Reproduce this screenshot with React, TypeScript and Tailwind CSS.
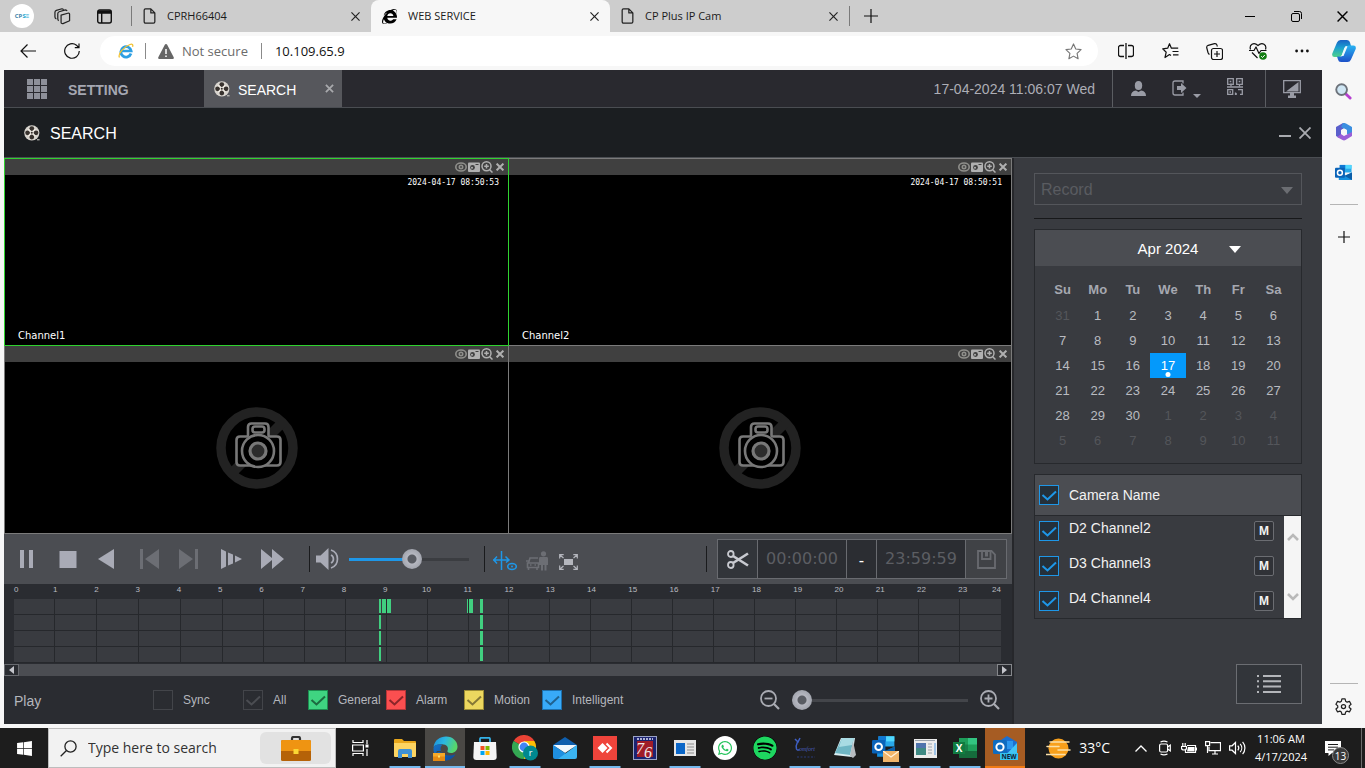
import React from "react";
import { FaWhatsapp, FaSpotify, FaWindows, FaInternetExplorer } from "react-icons/fa";

type IconProps = { className?: string };

const SEGOE = "font-['Open_Sans','Noto_Sans',sans-serif]";

/* ---------- browser icons ---------- */

const CloseX = ({ className = "size-[9px]" }: IconProps) => (
  <svg viewBox="0 0 10 10" className={className} fill="none" stroke="currentColor" strokeWidth="1.3">
    <path d="M0.5 0.5 9.5 9.5M9.5 0.5 0.5 9.5" />
  </svg>
);

const PageIcon = () => (
  <svg viewBox="0 0 14 18" className="h-4 w-[13px]" fill="none" stroke="#222" strokeWidth="1.4" strokeLinejoin="round">
    <path d="M2.5 1h6L13 5.5V15.500a1.500 1.500 0 0 1-1.500 1.500h-9A1.500 1.500 0 0 1 1 15.500v-13A1.500 1.500 0 0 1 2.500 1zM8.500 1v4.500H13" />
  </svg>
);

const Film = ({ className = "size-4" }: IconProps) => (
  <svg viewBox="0 0 16 16" className={className}>
    <circle cx="7.800" cy="7.800" r="7.600" fill="#d9d5cf" />
    <circle cx="7.800" cy="3.600" r="2.400" fill="#38322e" />
    <circle cx="3.600" cy="7.800" r="2.400" fill="#38322e" />
    <circle cx="12" cy="7.800" r="2.400" fill="#38322e" />
    <circle cx="7.800" cy="12" r="2.400" fill="#38322e" />
    <path d="M4.300 4.300l7 7M11.300 4.300l-7 7" stroke="#efeae2" strokeWidth="1.400" />
    <circle cx="7.800" cy="7.800" r="1" fill="#38322e" />
    <path d="M13 14.800h2.600" stroke="#d9d5cf" strokeWidth="1" />
  </svg>
);

const IeColor = () => (
  <svg viewBox="0 0 16 16" className="size-4" fill="none">
    <path d="M13 10.500A5.200 5.200 0 1 1 13.200 8H4.200" stroke="#2d9fe3" strokeWidth="2.700" />
    <path d="M1.500 14.500C-.5 11 6 3.500 12 1.500c2.500-.8 3.300.3 2.500 2.300" stroke="#f2c230" strokeWidth="1.300" />
  </svg>
);

const Copilot = () => (
  <svg viewBox="0 0 24 22" className="h-[22px] w-6">
    <defs>
      <linearGradient id="cpA" x1="0" y1="0" x2="0" y2="1">
        <stop offset="0" stopColor="#1b62c4" />
        <stop offset=".45" stopColor="#1b9fd0" />
        <stop offset="1" stopColor="#4fd28a" />
      </linearGradient>
      <linearGradient id="cpB" x1="0" y1="0" x2="0" y2="1">
        <stop offset="0" stopColor="#29b3f2" />
        <stop offset="1" stopColor="#1c50c8" />
      </linearGradient>
    </defs>
    <path d="M5 2.500Q6 0 8.500 0H15q2.500 0 3 2.500l1 3.500h-4q-2 0-2.700 2l-2.500 7q-.8 2-2.800 2H2.500Q-.5 17 .3 13.500z" fill="url(#cpA)" />
    <path d="M19 19.500Q18 22 15.500 22H9q-2.500 0-3-2.500L5 16.500h4q2 0 2.700-2l2.500-7q.8-2 2.800-2h4.500q3 0 2.200 3.500z" fill="url(#cpB)" />
    <path d="M13.500 6.500h2l-4 9.500h-2z" fill="#eafaff" />
  </svg>
);

const OutlookMark = ({ className = "size-4" }: IconProps) => (
  <svg viewBox="0 0 18 18" className={className}>
    <path d="M5 1h12.500v8H5z" fill="#28a8ea" />
    <path d="M5 1h6v4H5z" fill="#0f78d4" />
    <path d="M11 1h6.500v4H11z" fill="#50d9ff" />
    <path d="M4 9l7 3.500L18 9v8H4z" fill="#1490df" />
    <path d="M18 9v8l-8-4.500z" fill="#0a5ea8" />
    <rect x="0" y="4" width="10.500" height="10.500" rx="1" fill="#0a63b8" />
    <circle cx="5.200" cy="9.200" r="2.600" fill="none" stroke="#fff" strokeWidth="1.600" />
  </svg>
);

/* ---------- shared controls ---------- */

type CheckProps = {
  id: string;
  checked?: boolean;
  disabled?: boolean;
  box: string;
  tick: string;
};

function CheckBox({ id, checked = false, disabled = false, box, tick }: CheckProps) {
  return (
    <span className="relative block size-5 shrink-0">
      <input
        id={id}
        type="checkbox"
        defaultChecked={checked}
        disabled={disabled}
        className={`peer block size-5 appearance-none border ${box}`}
      />
      <svg
        viewBox="0 0 20 20"
        className={`pointer-events-none absolute inset-0 hidden size-5 peer-checked:block ${tick}`}
        fill="none"
        stroke="currentColor"
        strokeWidth="2"
      >
        <path d="M3.500 10l5 4.500L17 6.500" />
      </svg>
    </span>
  );
}

const TabTitle = ({ icon, title, className }: { icon: React.ReactNode; title: string; className: string }) => (
  <div className={`flex h-8 w-[239px] items-center pr-2 pl-[11px] ${className}`}>
    {icon}
    <button className="ml-[11px] flex-1 text-left text-[11px] leading-4 text-[#1b1b1b]">{title}</button>
    <button aria-label={`Close ${title}`} className="flex size-4 items-center justify-center text-[#222]">
      <CloseX className="size-[9px]" />
    </button>
  </div>
);

function BrowserTabs() {
  return (
    <div className={`flex h-8 items-center bg-[#cdcdcd] ${SEGOE}`}>
      <span className="ml-2.5 flex size-6 items-center justify-center rounded-full bg-white text-[6px] font-bold text-[#3c7fa8]">
        CP<span className="text-[#18a5cf]">S≡</span>
      </span>
      <button aria-label="Workspaces" className="ml-5">
        <svg viewBox="0 0 18 18" className="size-[17px]" fill="none" stroke="#222" strokeWidth="1.300" strokeLinejoin="round">
          <path d="M7.500 7.500l8-2.200q1 0 1 1v7.200l-7 3q-2 .3-2-1.500zM5 13.500q-1-.5-1-2V6q0-1.500 1.500-2L12 2q1.500 0 1.800 1.200M2.500 11.500Q1 11 1 9.500V4.500Q1 3 2.500 2.500L8.500.800q1 0 1.500 1" />
        </svg>
      </button>
      <button aria-label="Tab actions" className="ml-[26px]">
        <svg viewBox="0 0 15 15" className="size-[15px]" fill="none" stroke="#111" strokeWidth="1.400">
          <rect x=".7" y="1" width="13.600" height="13" rx="2" />
          <path d="M1 2.500h13M1 3.700h13" strokeWidth="2" />
          <path d="M4.700 4v10" />
        </svg>
      </button>
      <span className="ml-[19px] h-5 w-px bg-[#7a7a7a]" />
      <TabTitle icon={<PageIcon />} title="CPRH66404" className="" />
      <TabTitle
        icon={<FaInternetExplorer className="size-[15px] text-black" />}
        title="WEB SERVICE"
        className="rounded-t-lg bg-[#f7f7f7]"
      />
      <TabTitle icon={<PageIcon />} title="CP Plus IP Cam" className="" />
      <span className="h-5 w-px bg-[#7a7a7a]" />
      <button aria-label="New tab" className="ml-[14px]">
        <svg viewBox="0 0 14 14" className="size-[14px]" stroke="#111" strokeWidth="1.200">
          <path d="M7 0v14M0 7h14" />
        </svg>
      </button>
      <div className="ml-auto flex">
        <button aria-label="Minimize" className="flex h-8 w-[46px] items-center justify-center">
          <span className="h-px w-2.5 bg-black" />
        </button>
        <button aria-label="Restore" className="flex h-8 w-[46px] items-center justify-center">
          <svg viewBox="0 0 11 11" className="size-[11px]" fill="none" stroke="#000">
            <rect x=".5" y="2.500" width="8" height="8" rx="1.500" />
            <path d="M3 .5h5.500a2 2 0 0 1 2 2V8" />
          </svg>
        </button>
        <button aria-label="Close window" className="flex h-8 w-[46px] items-center justify-center">
          <CloseX className="size-[11px]" />
        </button>
      </div>
    </div>
  );
}

const ToolBtn = ({ label, children }: { label: string; children: React.ReactNode }) => (
  <button aria-label={label} className="flex h-8 w-11 items-center justify-center">
    {children}
  </button>
);

function AddressBar() {
  return (
    <div className={`flex h-[38px] items-center bg-[#f7f7f7] ${SEGOE}`}>
      <button aria-label="Back" className="ml-1.5 flex w-11 justify-center">
        <svg viewBox="0 0 16 14" className="h-[14px] w-4" fill="none" stroke="#111" strokeWidth="1.200">
          <path d="M16 7H1M7.500.5 1 7l6.500 6.500" />
        </svg>
      </button>
      <button aria-label="Refresh" className="flex w-11 justify-center">
        <svg viewBox="0 0 16 16" className="size-4" fill="none" stroke="#111" strokeWidth="1.200">
          <path d="M15.300 8A7.300 7.300 0 1 1 12.500 2.200L14.500 4.500M15 .5v4.200h-4.200" />
        </svg>
      </button>
      <div className="ml-1.5 flex h-[30px] flex-1 items-center rounded-full bg-white pr-4 pl-[18px]">
        <IeColor />
        <span className="ml-[11px] h-4 w-px bg-[#8a8a8a]" />
        <svg viewBox="0 0 16 15" className="ml-3 h-[15px] w-4">
          <path d="M8 0q.8 0 1.200.8l6.500 12.500q.6 1.700-1 1.700H1.300q-1.600 0-1-1.700L6.800.8Q7.200 0 8 0z" fill="#666" />
          <path d="M8 5v5M8 11.500v1.500" stroke="#fff" strokeWidth="1.500" />
        </svg>
        <button className="ml-2 text-[13px] leading-5 text-[#6b6b6b]">Not secure</button>
        <span className="ml-[13px] h-4 w-px bg-[#8a8a8a]" />
        <input
          aria-label="Address"
          defaultValue="10.109.65.9"
          className="ml-[13px] min-w-0 flex-1 bg-transparent text-[13px] leading-5 text-[#111] outline-none"
        />
        <button aria-label="Favorite">
          <svg viewBox="0 0 18 18" className="size-[17px]" fill="none" stroke="#777" strokeWidth="1.200" strokeLinejoin="round">
            <path d="M9 1l2.400 5.300 5.600.7-4.200 3.900 1.100 5.800L9 13.900l-4.900 2.800 1.100-5.800L1 7l5.600-.7z" />
          </svg>
        </button>
      </div>
      <div className="ml-1.5 flex">
        <ToolBtn label="Split screen">
          <svg viewBox="0 0 16 16" className="size-4" fill="none" stroke="#111" strokeWidth="1.300">
            <path d="M6 2.500H2.500a2 2 0 0 0-2 2v7a2 2 0 0 0 2 2H6M10 2.500h3.500a2 2 0 0 1 2 2v7a2 2 0 0 1-2 2H10M8 0v16" />
          </svg>
        </ToolBtn>
        <ToolBtn label="Favorites">
          <svg viewBox="0 0 17 16" className="h-4 w-[17px]" fill="none" stroke="#111" strokeWidth="1.200" strokeLinejoin="round">
            <path d="M9 12.500 7.500 11.500 3 14.500 4.200 9.200.7 5.800l5-.6L7.500.7l1.900 4.500h6.800M10.500 8.500h6M11 11.800h5.500" />
          </svg>
        </ToolBtn>
        <ToolBtn label="Collections">
          <svg viewBox="0 0 17 17" className="size-[17px]" fill="none" stroke="#111" strokeWidth="1.200">
            <rect x="5.500" y="5.500" width="11" height="11" rx="2" />
            <path d="M11 8v6M8 11h6M3.500 11.500Q2.500 11 2 9.500L.8 5Q.300 3 2.200 2.300L8.500.7q2-.3 2.500 1.500L11.400 3.500" />
          </svg>
        </ToolBtn>
        <ToolBtn label="Browser essentials">
          <svg viewBox="0 0 18 18" className="size-[18px]" fill="none" stroke="#111" strokeWidth="1.200" strokeLinejoin="round">
            <path d="M1.500 7.500C0 3 4.500-.5 9 3.500 13.500-.5 18 3 16.500 7.500M3 10.500l5.500 5.500M0 8.500h5l2-3.500 3 6.500 2-3h5.500" />
            <circle cx="14" cy="14" r="3.800" fill="#107c10" stroke="none" />
            <path d="M12.200 14.200l1.300 1.300 2.300-2.500" stroke="#fff" strokeWidth="1" />
          </svg>
        </ToolBtn>
        <ToolBtn label="Settings and more">
          <svg viewBox="0 0 14 4" className="h-1 w-[14px]" fill="#111">
            <circle cx="1.600" cy="2" r="1.400" />
            <circle cx="7" cy="2" r="1.400" />
            <circle cx="12.400" cy="2" r="1.400" />
          </svg>
        </ToolBtn>
      </div>
      <button aria-label="Copilot" className="flex w-[41px] justify-center pr-0.5">
        <Copilot />
      </button>
    </div>
  );
}

function EdgeSidebar() {
  return (
    <aside className="flex w-[43px] shrink-0 flex-col items-center bg-[#f7f7f7]">
      <button aria-label="Search" className="mt-[13px]">
        <svg viewBox="0 0 18 18" className="block size-[17px]">
          <path d="M11 11l5 5" stroke="#b63fd0" strokeWidth="3" strokeLinecap="round" />
          <circle cx="7" cy="7" r="5.700" fill="#cfe6f4" stroke="#6d737b" strokeWidth="2" />
        </svg>
      </button>
      <button aria-label="Microsoft 365" className="mt-[23px]">
        <svg viewBox="0 0 18 18" className="block size-[18px]">
          <path d="M8 0 1 4v9l3.500 2 1.500-1V7l6-3.500V2z" fill="#5a5fcb" />
          <path d="M8 0q1.500-.3 3 .5L17 4v7l-5 .5V7L6 4z" fill="#3b8fe0" />
          <path d="M17 9v4l-6.500 4q-1.500.8-3 0L2 14l4-3 3 2z" fill="#9a5fd8" />
          <path d="M9 5.500l3 1.800v3.400l-3 1.800-3-1.800V7.300z" fill="#f7f7f7" />
        </svg>
      </button>
      <button aria-label="Outlook" className="mt-[23px]">
        <OutlookMark className="block size-[17px]" />
      </button>
      <span className="mt-[23px] h-px w-7 bg-[#b5b5b5]" />
      <button aria-label="Customize" className="mt-[26px]">
        <svg viewBox="0 0 12 12" className="block size-3" stroke="#111" strokeWidth="1.200">
          <path d="M6 0v12M0 6h12" />
        </svg>
      </button>
      <span className="mt-auto h-px w-7 bg-[#b5b5b5]" />
      <button aria-label="Settings" className="mt-3.5 mb-[13px]">
        <svg viewBox="0 0 18 18" className="block size-[17px]" fill="none" stroke="#222" strokeWidth="1.300" strokeLinejoin="round">
          <path d="M7.300 1h3.400l.6 2.500 1.500.9 2.500-.8 1.700 3-1.900 1.700v1.700l1.900 1.700-1.700 3-2.500-.8-1.500.9-.6 2.500H7.300l-.6-2.500-1.500-.9-2.500.8-1.700-3L2.900 10V8.300L1 6.600l1.700-3 2.500.8 1.500-.9z" />
          <circle cx="9" cy="9.100" r="2.200" />
        </svg>
      </button>
    </aside>
  );
}

/* ---------- application header ---------- */

function AppHeader() {
  return (
    <header className="flex h-[38px] items-stretch border-b border-[#4a4d52] bg-[#29292f] text-[#9a9ca6]">
      <button className="flex w-[200px] items-center pl-[23px] text-sm font-bold text-[#a5a7b2]">
        <svg viewBox="0 0 20 20" className="mr-[21px] size-5" fill="#8e909a">
          <path d="M0 0h6v6H0zM7 0h6v6H7zM14 0h6v6h-6zM0 7h6v6H0zM7 7h6v6H7zM14 7h6v6h-6zM0 14h6v6H0zM7 14h6v6H7zM14 14h6v6h-6z" />
        </svg>
        <span className="pt-0.5">SETTING</span>
      </button>
      <div className="flex w-[138px] items-center bg-[#56575c] pr-2 pl-2.5 text-white">
        <Film />
        <button className="ml-2 flex-1 pt-0.5 text-left text-sm">SEARCH</button>
        <button aria-label="Close search tab" className="text-[#a8a9ac]">
          <svg viewBox="0 0 10 10" className="size-[9px]" stroke="currentColor" strokeWidth="2">
            <path d="M1 1l8 8M9 1 1 9" />
          </svg>
        </button>
      </div>
      <time className="ml-auto flex items-center pr-[17px] text-sm text-[#adaeb6]">17-04-2024 11:06:07 Wed</time>
      <div className="flex w-[153px] items-center border-l border-[#5b5d62] pl-[18px]">
        <button aria-label="User">
          <svg viewBox="0 0 15 15" className="size-[15px]" fill="currentColor">
            <ellipse cx="7.500" cy="4.500" rx="3.700" ry="4.500" />
            <path d="M0 15q0-5 5-5.500l2.500 1.500L10 9.500q5 .5 5 5.500z" />
          </svg>
        </button>
        <button aria-label="Log out" className="ml-[26px] flex items-end">
          <svg viewBox="0 0 15 16" className="mb-0.5 h-4 w-[15px]" fill="none" stroke="currentColor" strokeWidth="1.300">
            <path d="M11 3.500V1H3Q1 1 1 3v10q0 2 2 2h8v-2.500" />
            <path d="M5 6h4V3l5.500 5L9 13v-3H5z" fill="currentColor" stroke="none" />
          </svg>
          <svg viewBox="0 0 8 4" className="ml-1.5 h-1 w-2" fill="currentColor">
            <path d="M0 0h8L4 4z" />
          </svg>
        </button>
        <button aria-label="QR code" className="mb-1 ml-[26px]">
          <svg viewBox="0 0 16 17" className="h-[17px] w-4" fill="none" stroke="currentColor" strokeWidth="1.300">
            <path d="M.7.7h5.600v5.600H.7zM9.700.7h5.600v5.600H9.700zM0 9h16M.7 11.700h5v4.600h-5zM11 11.700h4.300v4.600H13M8.500 14.500v2.500M2.700 3.500h1.600M11.700 3.500h1.600" />
            <path d="M4 5.500v3M12.500 6v2.500M2.500 14h1.500M8 16h2" />
          </svg>
        </button>
      </div>
      <button aria-label="Full screen" className="flex w-[57px] items-center border-l border-[#5b5d62] pl-[17px]">
        <svg viewBox="0 0 18 18" className="size-[18px]" fill="none" stroke="currentColor" strokeWidth="1.300">
          <path d="M.7.7h16.600v12H.7z" />
          <path d="M15.500 2v9.500H3zM7 13h4v2.500h2V18H5v-2.500h2z" fill="currentColor" stroke="none" />
        </svg>
      </button>
    </header>
  );
}

function PageTitle() {
  return (
    <div className="flex h-[50px] items-center border-b border-[#4a4d52] bg-[#1b1e21] pr-[11px] pl-5">
      <Film />
      <h1 className="ml-2.5 flex-1 pt-0.5 text-base text-white">SEARCH</h1>
      <button aria-label="Minimize page" className="mt-1.5 h-0.5 w-3 bg-[#a9abb0]" />
      <button aria-label="Close page" className="ml-2 text-[#a9abb0]">
        <svg viewBox="0 0 12 12" className="size-3" stroke="currentColor" strokeWidth="1.800">
          <path d="M.5.500l11 11M11.500.5.500 11.500" />
        </svg>
      </button>
    </div>
  );
}

/* ---------- video wall ---------- */

type Cell = { name?: string; time?: string; border: string };

const CELLS: Cell[] = [
  { name: "Channel1", time: "2024-04-17 08:50:53", border: "border border-[#2fd32f]" },
  { name: "Channel2", time: "2024-04-17 08:50:51", border: "border-y border-r border-[#7b7b7b]" },
  { border: "border-x border-b border-[#7b7b7b]" },
  { border: "border-r border-b border-[#7b7b7b]" },
];

const NoCamera = () => (
  <svg viewBox="0 0 82 82" className="size-[82px]" fill="none">
    <circle cx="41" cy="41" r="36" stroke="#222" strokeWidth="9.500" />
    <path d="M17 65 65 17" stroke="#222" strokeWidth="10" />
    <g stroke="#787878" strokeWidth="2.600">
      <path
        d="M28 58.500h-4q-3.500 0-3.500-3.500V33q0-3.500 3.500-3.500h6.500q1.500 0 1.500-1.500V20q0-3.500 3.500-3.500h13.500q3.500 0 3.500 3.500v8q0 1.500 1.500 1.500H61q3.500 0 3.500 3.500v22q0 3.500-3.500 3.500h-4z"
        fill="#000"
      />
      <rect x="36.500" y="19.500" width="12" height="6" rx="2.500" />
      <circle cx="42" cy="44" r="16" fill="#000" />
      <circle cx="42" cy="44" r="8" fill="#2c2c2c" strokeWidth="3.200" />
    </g>
  </svg>
);

function CellTools() {
  return (
    <div className="flex h-4 items-center justify-end gap-px bg-[#404040] pr-1 text-[#b0b0b0]">
      <button aria-label="Fisheye">
        <svg viewBox="0 0 12 10" className="h-2.5 w-3" fill="none" stroke="#8f8f8b" strokeWidth="1.600">
          <ellipse cx="6" cy="5" rx="5.200" ry="4" />
          <circle cx="6" cy="5" r="1.700" />
        </svg>
      </button>
      <button aria-label="Snapshot">
        <svg viewBox="0 0 12 10" className="h-2.5 w-3" fill="currentColor">
          <path d="M0 1.500q0-1 1-1h10q1 0 1 1V9q0 1-1 1H1q-1 0-1-1z" />
          <circle cx="4.500" cy="5.500" r="2.400" fill="#404040" />
          <circle cx="4" cy="5.800" r="1" fill="#b0b0b0" />
          <path d="M7.500 2.500h3" stroke="#404040" />
        </svg>
      </button>
      <button aria-label="Zoom">
        <svg viewBox="0 0 12 12" className="size-3" fill="none" stroke="currentColor" strokeWidth="1.500">
          <circle cx="5.500" cy="5.300" r="4.500" />
          <path d="M5.500 3v4.600M3.200 5.300h4.600M8.700 8.700l2.800 2.800" />
        </svg>
      </button>
      <button aria-label="Close channel" className="ml-0.5">
        <svg viewBox="0 0 9 9" className="size-2" stroke="currentColor" strokeWidth="2.200">
          <path d="M.7.7l7.600 7.600M8.300.7.7 8.300" />
        </svg>
      </button>
    </div>
  );
}

function VideoWall() {
  return (
    <div className="grid flex-1 grid-cols-[505fr_503fr] grid-rows-2">
      {CELLS.map((c, i) => (
        <section key={i} className={`flex min-h-40 flex-col bg-black ${c.border}`}>
          <CellTools />
          {c.name ? (
            <div className="flex flex-1 flex-col justify-between pt-[3px] pr-[9px] pb-[3px] pl-[13px] text-white">
              <span className="text-right font-['DejaVu_Sans_Mono',monospace] text-[8px] leading-[10px]">{c.time}</span>
              <span className="font-['DejaVu_Sans',sans-serif] text-[10px] leading-3">{c.name}</span>
            </div>
          ) : (
            <div className="flex flex-1 items-center justify-center">
              <NoCamera />
            </div>
          )}
        </section>
      ))}
    </div>
  );
}

/* ---------- playback controls ---------- */

const PlayBtn = ({ label, d, dim = false }: { label: string; d: string; dim?: boolean }) => (
  <button
    aria-label={label}
    disabled={dim}
    className={`flex h-8 w-[41px] items-center justify-center ${dim ? "text-[#6c6e74]" : "text-[#a9abb6]"}`}
  >
    <svg viewBox="0 0 26 20" className="h-5 w-[26px]" fill="currentColor">
      <path d={d} />
    </svg>
  </button>
);

const THUMB =
  "[&::-webkit-slider-thumb]:size-5 [&::-webkit-slider-thumb]:appearance-none [&::-webkit-slider-thumb]:rounded-full [&::-webkit-slider-thumb]:bg-[radial-gradient(circle,#595c63_0_4px,#b5b7c0_5px,#a2a5ae_10px)]";

function PlaybackBar() {
  return (
    <div className="flex h-[50px] items-center bg-[#4b4d52] pr-[5px] pl-0.5">
      <PlayBtn label="Pause" d="M6 1h4v18H6zM15 1h4v18h-4z" />
      <PlayBtn label="Stop" d="M4.500 2h17v17h-17z" />
      <PlayBtn label="Play backwards" d="M18 0v20L2 10z" />
      <PlayBtn label="Previous frame" dim d="M3 0h3v20H3zM22 0v20L8 10z" />
      <PlayBtn label="Next frame" dim d="M17 0h3v20h-3zM1 0v20l14-10z" />
      <PlayBtn label="Slow" d="M2 0l5 2.500v15L2 20zM9 3.500l5 2v9l-5 2zM16 6.500l7 3.500-7 3.500z" />
      <PlayBtn label="Fast" d="M1 0l11 9V0l12 10-12 10v-9L1 20z" />
      <span className="ml-4 h-[26px] w-px bg-[#1a1b1d]" />
      <button aria-label="Mute" className="ml-1.5 text-[#a9abb6]">
        <svg viewBox="0 0 24 22" className="h-[22px] w-6" fill="currentColor">
          <path d="M0 7.500h4.500L12.500 0v22L4.500 14.500H0z" />
          <path d="M15 7a4.500 4.500 0 0 1 0 8M15 2a9.500 9.500 0 0 1 0 18" fill="none" stroke="currentColor" strokeWidth="1.700" />
        </svg>
      </button>
      <input
        aria-label="Volume"
        type="range"
        defaultValue={53}
        className={`ml-[9px] h-5 w-[120px] appearance-none bg-[linear-gradient(to_right,#1e97e8_53%,#3b3d41_53%)] bg-[length:100%_3px] bg-center bg-no-repeat ${THUMB}`}
      />
      <span className="ml-[15px] h-[26px] w-px bg-[#1a1b1d]" />
      <button aria-label="Sync play" className="mt-1 ml-2 text-[#1e97e8]">
        <svg viewBox="0 0 24 20" className="h-5 w-6" fill="none" stroke="currentColor" strokeWidth="1.500">
          <path d="M8.500 0v19M0 9h16M4 5.500.8 9 4 12.500M12.500 5.500 16 9l-3 2.500" />
          <ellipse cx="19" cy="15.500" rx="4.300" ry="3" strokeWidth="1.600" />
          <circle cx="19" cy="15.500" r="1" fill="currentColor" stroke="none" />
        </svg>
      </button>
      <button aria-label="Smart search" disabled className="mt-1 ml-[9px] text-[#6c6e74]">
        <svg viewBox="0 0 22 20" className="h-5 w-[22px]" fill="currentColor">
          <circle cx="17.500" cy="2.800" r="2.600" />
          <path d="M14 6h7q1 0 1 1.500V14h-1.500v5.500h-2V14h-1.500v5.500h-2V14H13V7.500Q13 6 14 6z" />
          <path d="M2.500 12 4 7h8M0 10h3M1.500 12h11v4.500h-11zM2.500 16v3M11 16v3M4 14h1.500M8.500 14H10" fill="none" stroke="currentColor" strokeWidth="1.600" />
        </svg>
      </button>
      <button aria-label="Full screen video" className="mt-[5px] ml-[11px] text-[#b4b6bd]">
        <svg viewBox="0 0 19 16" className="h-4 w-[19px]" fill="none" stroke="currentColor" strokeWidth="1.200">
          <path d="M.7 4.500V.7h4M.7 11.500v3.800h4M18.300 4.500V.7h-4M18.300 11.500v3.800h-4M1 1l3.500 3M18 1l-3.500 3M1 15l3.500-3M18 15l-3.500-3" />
          <path d="M5 5h9v6H5z" fill="currentColor" stroke="none" />
        </svg>
      </button>
      <span className="ml-auto h-[26px] w-px bg-[#1a1b1d]" />
      <div className="ml-2.5 flex h-10 items-stretch divide-x divide-[#696b70] border border-[#696b70] bg-[#2b2d32]">
        <button aria-label="Clip" className="flex w-10 items-center justify-center bg-[#32353a] text-[#c8cad0]">
          <svg viewBox="0 0 22 19" className="h-[19px] w-[22px]" fill="none" stroke="currentColor" strokeWidth="1.800">
            <ellipse cx="3.800" cy="4" rx="2.800" ry="3" />
            <ellipse cx="3.800" cy="15" rx="2.800" ry="3" />
            <path d="M6 6 21 15.500" strokeWidth="2.600" />
            <path d="M6 13 21 3.500" strokeWidth="2.600" />
          </svg>
        </button>
        <input
          aria-label="Start time"
          defaultValue="00:00:00"
          className="w-[89px] bg-transparent text-center font-['DejaVu_Sans',sans-serif] text-base text-[#5c5e63] outline-none"
        />
        <span className="flex w-[30px] items-center justify-center pt-1 text-base text-white">-</span>
        <input
          aria-label="End time"
          defaultValue="23:59:59"
          className="w-[89px] bg-transparent text-center font-['DejaVu_Sans',sans-serif] text-base text-[#5c5e63] outline-none"
        />
        <button aria-label="Save clip" disabled className="flex w-10 items-center justify-center bg-[#404246] text-[#696b70]">
          <svg viewBox="0 0 19 19" className="size-[19px]" fill="none" stroke="currentColor" strokeWidth="1.800">
            <path d="M1 1h13.500L18 4.500V18H1z" />
            <path d="M5 1v8h8.500V1" />
            <path d="M9.500 2v4.500" strokeWidth="3" />
          </svg>
        </button>
      </div>
    </div>
  );
}

/* ---------- timeline ---------- */

const HOURS = Array.from({ length: 23 }, (_, i) => i + 1);
const MORNING: [number, number] = [8.875, 8.935];
const NOON: [number, number] = [11.331, 11.404];
const TRACKS: [number, number][][] = [
  [MORNING, [8.96, 9.046], [9.082, 9.167], [11.015, 11.04], [11.064, 11.161], NOON],
  [MORNING, NOON],
  [MORNING, NOON],
  [MORNING, NOON],
];

function Timeline() {
  return (
    <div className="bg-[#2a2c31]">
      <div className="pr-[11px] pl-2.5 pb-px">
        <div className="flex h-[15px] pt-px text-[8px] leading-[10px] text-[#b9bbc0]">
          <span className="min-w-0 flex-1">0</span>
          {HOURS.map((h) => (
            <span key={h} className="min-w-0 flex-2 pl-[3px] text-center">
              {h}
            </span>
          ))}
          <span className="flex min-w-0 flex-1 justify-end">24</span>
        </div>
        {TRACKS.map((segments, row) => (
          <div
            key={row}
            className="relative grid h-4 grid-cols-[41fr_repeat(4,42fr)_repeat(19,41fr)] border-b border-[#26282c] bg-[#393b40]"
          >
            {Array.from({ length: 24 }, (_, i) => (
              <span key={i} className={i < 23 ? "border-r border-[#26282c]" : ""} />
            ))}
            {segments.map(([from, to]) => (
              <span
                key={from}
                className="absolute top-0 h-3.5 bg-[#41cf80]"
                style={{ left: `${(from / 24) * 100}%`, width: `${((to - from) / 24) * 100}%` }}
              />
            ))}
          </div>
        ))}
      </div>
      <div className="flex h-3 justify-between bg-[#4b4d52]">
        <button aria-label="Scroll left" className="flex w-[15px] items-center justify-center border border-[#696b70] bg-[#2a2c31]">
          <svg viewBox="0 0 5 8" className="h-2 w-[5px]" fill="#c3c4ca">
            <path d="M5 0v8L0 4z" />
          </svg>
        </button>
        <button aria-label="Scroll right" className="flex w-[15px] items-center justify-center border border-[#85878b] bg-[#2a2c31]">
          <svg viewBox="0 0 5 8" className="h-2 w-[5px]" fill="#c3c4ca">
            <path d="M0 0v8l5-4z" />
          </svg>
        </button>
      </div>
    </div>
  );
}

type Filter = CheckProps & { label: string; width: string };

const FILTERS: Filter[] = [
  { id: "f-sync", label: "Sync", width: "w-[90px]", box: "border-[#43454a]", tick: "" },
  { id: "f-all", label: "All", width: "w-[65px]", checked: true, disabled: true, box: "border-[#43454a]", tick: "text-[#4b4d52]" },
  { id: "f-general", label: "General", width: "w-[78px]", checked: true, box: "border-[#1c8e50] bg-[#3fd481]", tick: "text-[#1c6b40]" },
  { id: "f-alarm", label: "Alarm", width: "w-[78px]", checked: true, box: "border-[#b63538] bg-[#fb4f50]", tick: "text-[#8a2529]" },
  { id: "f-motion", label: "Motion", width: "w-[78px]", checked: true, box: "border-[#9c8c35] bg-[#ecd75f]", tick: "text-[#857736]" },
  { id: "f-intelligent", label: "Intelligent", width: "", checked: true, box: "border-[#1d70ad] bg-[#38aaf8]", tick: "text-[#1f628f]" },
];

const Magnifier = ({ plus = false }: { plus?: boolean }) => (
  <svg viewBox="0 0 20 20" className="block size-5" fill="none" stroke="#a9abb2" strokeWidth="1.800">
    <circle cx="8.500" cy="8.500" r="7.500" />
    <path d="M14 14l5 5" strokeWidth="2.200" />
    <path d={plus ? "M4.500 8.500h8M8.500 4.500v8" : "M4.500 8.500h8"} />
  </svg>
);

function FilterBar() {
  return (
    <div className="flex h-12 items-center bg-[#2a2c31] pr-3 pl-2.5 text-[#b4b6bc]">
      <span className="w-[139px] pt-0.5 text-sm">Play</span>
      {FILTERS.map(({ label, width, ...box }) => (
        <div key={box.id} className={`flex items-center ${width}`}>
          <CheckBox {...box} />
          <label htmlFor={box.id} className="pl-2.5 text-xs">
            {label}
          </label>
        </div>
      ))}
      <button aria-label="Zoom timeline out" className="ml-auto">
        <Magnifier />
      </button>
      <input
        aria-label="Timeline zoom"
        type="range"
        defaultValue={0}
        className={`mx-3 h-5 w-44 appearance-none bg-[linear-gradient(#43454a,#43454a)] bg-[length:100%_3px] bg-center bg-no-repeat ${THUMB}`}
      />
      <button aria-label="Zoom timeline in">
        <Magnifier plus />
      </button>
    </div>
  );
}

/* ---------- right panel ---------- */

const WEEKDAYS = ["Su", "Mo", "Tu", "We", "Th", "Fr", "Sa"];
const WEEKS = [
  [31, 1, 2, 3, 4, 5, 6],
  [7, 8, 9, 10, 11, 12, 13],
  [14, 15, 16, 17, 18, 19, 20],
  [21, 22, 23, 24, 25, 26, 27],
  [28, 29, 30, 1, 2, 3, 4],
  [5, 6, 7, 8, 9, 10, 11],
];

const isOtherMonth = (week: number, day: number) => (week === 0 && day > 20) || (week > 3 && day < 20);

function Calendar() {
  return (
    <section className="mt-2.5 border border-[#27292d]">
      <button className="relative flex h-9 w-full items-center justify-center bg-[#4b4d52] pt-0.5 text-[15px] text-white">
        Apr 2024
        <svg viewBox="0 0 12 7" className="absolute right-15 h-[7px] w-3" fill="#fff">
          <path d="M0 0h12L6 7z" />
        </svg>
      </button>
      <div className="px-2.5 pt-[11px] pb-2.5">
        <table className="w-full table-fixed border-collapse text-center text-[13px] leading-[25px] text-[#b9bbc1]">
          <thead>
            <tr>
              {WEEKDAYS.map((d) => (
                <th key={d} className="p-0 leading-[26px] font-bold text-[#a6a8b0]">
                  {d}
                </th>
              ))}
            </tr>
          </thead>
          <tbody>
            {WEEKS.map((week, w) => (
              <tr key={w}>
                {week.map((day, d) => {
                  if (w === 2 && day === 17) {
                    return (
                      <td key={d} className="relative bg-[#0499fb] p-0 text-white">
                        {day}
                        <span className="absolute bottom-px left-1/2 size-[5px] -translate-x-1/2 rounded-full bg-white" />
                      </td>
                    );
                  }
                  return (
                    <td key={d} className={isOtherMonth(w, day) ? "p-0 text-[#54565b]" : "p-0"}>
                      {day}
                    </td>
                  );
                })}
              </tr>
            ))}
          </tbody>
        </table>
      </div>
    </section>
  );
}

const CAMERAS = ["D2 Channel2", "D3 Channel3", "D4 Channel4"];
const BLUE_BOX = "border-[#1e97e8] bg-[#25303a]";

const ScrollChevron = ({ down = false }: { down?: boolean }) => (
  <svg viewBox="0 0 12 8" className="h-2 w-3" fill="none" stroke="#b9b9b9" strokeWidth="2.600">
    <path d={down ? "M1 1l5 5 5-5" : "M1 7l5-5 5 5"} />
  </svg>
);

function CameraList() {
  return (
    <section className="mt-2.5 border border-[#27292d] text-sm text-[#f2f2f2]">
      <div className="flex h-10 items-center bg-[#4b4d52] pl-1">
        <CheckBox id="cam-all" checked box={BLUE_BOX} tick="text-[#1e97e8]" />
        <label htmlFor="cam-all" className="pl-2.5">
          Camera Name
        </label>
      </div>
      <div className="flex h-[103px] border-t border-[#27292d]">
        <ul className="flex-1 overflow-hidden">
          {CAMERAS.map((name, i) => (
            <li key={name} className="flex h-[35px] items-start pt-[5px] pr-2.5 pl-1">
              <CheckBox id={`cam-${i}`} checked box={BLUE_BOX} tick="text-[#1e97e8]" />
              <label htmlFor={`cam-${i}`} className="flex-1 pl-2.5 leading-[15px]">
                {name}
              </label>
              <button className="flex size-5 items-center justify-center rounded-xs border border-[#6b6d72] bg-[#303237] text-xs font-bold">
                M
              </button>
            </li>
          ))}
        </ul>
        <div className="flex w-[17px] flex-col justify-between bg-[#f5f5f5] py-[17px]">
          <button aria-label="Scroll up" className="flex justify-center">
            <ScrollChevron />
          </button>
          <button aria-label="Scroll down" className="flex justify-center">
            <ScrollChevron down />
          </button>
        </div>
      </div>
    </section>
  );
}

function SidePanel() {
  return (
    <aside className="flex w-[310px] shrink-0 flex-col border-l-2 border-[#26272b] bg-[#393b40] px-5 pt-[15px] pb-5">
      <div className="relative">
        <select
          aria-label="Source"
          disabled
          className="block h-8 w-full appearance-none border border-[#54565b] px-1.5 pt-0.5 text-base text-[#5a5c61] opacity-100"
        >
          <option>Record</option>
        </select>
        <svg viewBox="0 0 12 7" className="pointer-events-none absolute top-[14px] right-[9px] h-[7px] w-3" fill="#6b6d72">
          <path d="M0 0h12L6 7z" />
        </svg>
      </div>
      <hr className="mt-[13px] border-[#17181a]" />
      <Calendar />
      <CameraList />
      <button
        aria-label="File list"
        className="mt-auto flex h-10 w-[66px] items-center justify-center self-end border border-[#6b6d72] bg-[#32353a]"
      >
        <svg viewBox="0 0 24 18" className="h-[18px] w-6" stroke="#b4b6ba" strokeWidth="2">
          <path d="M0 1h2M6 1h18M0 6.300h2M6 6.300h18M0 11.600h2M6 11.600h18M0 17h2M6 17h18" />
        </svg>
      </button>
    </aside>
  );
}

/* ---------- taskbar ---------- */

const FolderApp = () => (
  <svg viewBox="0 0 22 19" className="h-[19px] w-[22px]">
    <path d="M0 1q0-1 1-1h7l2 2h11q1 0 1 1v4H0z" fill="#e8a71c" />
    <path d="M0 4h22v13q0 1-1 1H1q-1 0-1-1z" fill="#fcd462" />
    <path d="M4 19v-7q0-2 2-2h10q2 0 2 2v7h-4v-4H8v4z" fill="#3f91d4" />
  </svg>
);

const EdgeApp = () => (
  <svg viewBox="0 0 25 25" className="size-[25px]">
    <defs>
      <linearGradient id="egA" x1="0" y1="0" x2="1" y2=".3">
        <stop offset="0" stopColor="#1c8ddb" />
        <stop offset=".5" stopColor="#2bb8e2" />
        <stop offset="1" stopColor="#57d66b" />
      </linearGradient>
      <linearGradient id="egB" x1="0" y1="0" x2="1" y2="1">
        <stop offset="0" stopColor="#1673c8" />
        <stop offset="1" stopColor="#0c4a9c" />
      </linearGradient>
    </defs>
    <path d="M.5 11C1.500 4 7 .5 13 .5c7 0 11.500 5 11.500 10 0 4-3 6.500-6.500 6.500-3 0-4-1.200-3.500-2.200 1-1.500.8-5.800-4-6.300C6 8 2 9 .5 11z" fill="url(#egA)" />
    <path d="M.5 12C1 8.500 6 7.500 9.500 8.800c-3 2-2.500 7.500 1.500 9.700 4 2 9 1 11.500-.5-2 4-6 6.500-10 6.500C5 24.500 0 19 .5 12z" fill="url(#egB)" />
    <path d="M0 17h12v8H0z" fill="#e58a12" />
    <path d="M0 17h12v3.500H0z" fill="#f7a928" />
    <path d="M4 17v-1.500h4V17" fill="none" stroke="#444" />
    <path d="M5 19.500h2v2H5z" fill="#ffe06a" />
  </svg>
);

const StoreApp = () => (
  <svg viewBox="0 0 24 23" className="h-[23px] w-6">
    <path d="M7 6V2q0-1.200 1.200-1.200h7.600Q17 .8 17 2v4" fill="none" stroke="#35b2e8" strokeWidth="1.800" />
    <path d="M1 5h22l.7 15q0 3-3 3H3.300q-3 0-3-3z" fill="#f4f4f4" />
    <path d="M7.500 9h4v4h-4z" fill="#f25022" />
    <path d="M12.500 9h4v4h-4z" fill="#7fba00" />
    <path d="M7.500 14h4v4h-4z" fill="#00a4ef" />
    <path d="M12.500 14h4v4h-4z" fill="#ffb900" />
  </svg>
);

const ChromeApp = () => (
  <svg viewBox="0 0 27 26" className="h-[26px] w-[27px]">
    <path d="M12 12 1.600 6A12 12 0 0 1 22.400 6z" fill="#ea4335" />
    <path d="M12 12 1.600 6A12 12 0 0 0 12 24l5-9z" fill="#34a853" />
    <path d="M12 12V6h10.400A12 12 0 0 1 12 24z" fill="#fbbc05" />
    <circle cx="12" cy="12" r="5.600" fill="#fff" />
    <circle cx="12" cy="12" r="4.400" fill="#4285f4" />
    <circle cx="18.500" cy="18" r="7.500" fill="#00888f" />
    <text x="18.500" y="21" textAnchor="middle" fontSize="9" fill="#fff" fontFamily="Open Sans">
      r
    </text>
  </svg>
);

const MailApp = () => (
  <svg viewBox="0 0 24 22" className="h-[22px] w-6">
    <path d="M0 8 12 0l12 8v3H0z" fill="#0f5fae" />
    <path d="M0 8h24l-12 8z" fill="#f1f8fd" />
    <path d="M0 8l12 8 4 6H2q-2 0-2-2z" fill="#1f8fe0" />
    <path d="M24 8v12q0 2-2 2H5z" fill="#3bb4f2" />
  </svg>
);

const AnyDeskApp = () => (
  <svg viewBox="0 0 24 24" className="size-6">
    <path d="M0 0h24v24H0z" fill="#ef443b" />
    <path d="M9.500 7l5 5-5 5-5-5z" fill="#fff" />
    <path d="M13.500 7.500 18 12l-4.500 4.500" fill="none" stroke="#fff" strokeWidth="2" />
  </svg>
);

const SeventySixApp = () => (
  <svg viewBox="0 0 24 24" className="size-6">
    <path d="M0 0h24v24H0z" fill="#9aa3c4" />
    <path d="M1 1h22v22H1z" fill="#1c2370" />
    <path d="M4 5h16v16H4z" fill="#a01c28" />
    <text x="3" y="18" fontSize="16" fill="#f0e8e8" fontFamily="Liberation Serif" fontStyle="italic">
      7
    </text>
    <text x="11" y="22" fontSize="16" fill="#f0e8e8" fontFamily="Liberation Serif" fontStyle="italic">
      6
    </text>
    <path d="M4 3h16" stroke="#dfe3f5" strokeWidth="1.500" strokeDasharray="2 1" />
  </svg>
);

const NewsApp = () => (
  <svg viewBox="0 0 22 16" className="h-4 w-[22px]">
    <path d="M0 0h22v16H0z" fill="#e6e6e6" />
    <path d="M2 3h9v11H2z" fill="#0a66c8" />
    <path d="M13 4h7M13 7h7M13 10h7M13 13h7" stroke="#8c8c8c" />
  </svg>
);

const ComfortApp = () => (
  <svg viewBox="0 0 24 24" className="size-6">
    <path d="M2 3l3 3 2-4M4.500 6q-2 4-1 7 1 2 3 .5" fill="none" stroke="#3f5fc4" strokeWidth="1.500" />
    <text x="6" y="15" fontSize="6" fill="#4a5fbe" fontFamily="Liberation Serif" fontStyle="italic">
      omfort
    </text>
    <path d="M4 21h18" stroke="#2b3a78" strokeDasharray="2 1.500" />
  </svg>
);

const NotepadApp = () => (
  <svg viewBox="0 0 24 24" className="size-6">
    <path d="M8 2h14l-3 19-18-2z" fill="#d9eef2" />
    <path d="M9 2h12l-4 17L2 17z" fill="#6fb6c4" />
    <path d="M9 2h12l-2 7-13 2z" fill="#a9dbe3" />
    <path d="M20 5l3 14-3 3-3-2z" fill="#b8bcc0" />
  </svg>
);

const OutlookMailApp = () => (
  <span className="relative block size-[27px]">
    <OutlookMark className="size-[23px]" />
    <svg viewBox="0 0 16 11" className="absolute right-0 bottom-0 h-[11px] w-4">
      <path d="M0 0h16v11H0z" fill="#f0b56a" />
      <path d="M0 0l8 6 8-6" fill="none" stroke="#fff2dc" strokeWidth="1.200" />
    </svg>
  </span>
);

const WindowApp = () => (
  <svg viewBox="0 0 23 19" className="h-[19px] w-[23px]">
    <path d="M0 0h23v19H0z" fill="#ececec" />
    <path d="M2 4h10v12H2z" fill="#3f8a84" />
    <path d="M2 4h10v5H2z" fill="#4f74ad" />
    <path d="M14 5h4M14 8h4M14 11h4M14 14h4M1 1.500h20" stroke="#9ba4ad" />
    <path d="M20 4h2v12h-2z" fill="#9fc3e6" />
  </svg>
);

const ExcelApp = () => (
  <svg viewBox="0 0 24 22" className="h-[22px] w-6">
    <path d="M6 1h18v20H6z" fill="#1e9e5a" />
    <path d="M15 1h9v6.500h-9z" fill="#33c481" />
    <path d="M6 14h18v7H6z" fill="#156b3c" />
    <path d="M6 7.500h9V14H6z" fill="#19804a" />
    <path d="M0 5h12v12H0z" fill="#107c41" />
    <text x="6" y="14.500" textAnchor="middle" fontSize="10" fontWeight="bold" fill="#fff" fontFamily="Open Sans">
      X
    </text>
  </svg>
);

const OutlookNewApp = () => (
  <svg viewBox="0 0 25 24" className="h-6 w-[25px]">
    <path d="M5 6 14 0l10 6v12H5z" fill="#1b6fd0" />
    <path d="M9 5h11v8H9z" fill="#2b97ee" />
    <path d="M24 7v15H10z" fill="#41c5f5" />
    <rect x="0" y="4" width="14" height="14" rx="1.500" fill="#0f6cc0" />
    <circle cx="7" cy="11" r="3.600" fill="none" stroke="#fff" strokeWidth="2" />
    <path d="M7 17h18v7H7z" fill="#35c3f0" />
    <text x="16" y="23" textAnchor="middle" fontSize="6.500" fontWeight="bold" fill="#10243a" fontFamily="Open Sans">
      NEW
    </text>
  </svg>
);

type App = { name: string; icon: React.ReactNode; open?: boolean; tone?: string; bar?: string };

const APPS: App[] = [
  { name: "File Explorer", icon: <FolderApp />, open: true },
  { name: "Edge", icon: <EdgeApp />, open: true, tone: "bg-[#4a4845]", bar: "w-full bg-[#76b9ed]" },
  { name: "Store", icon: <StoreApp /> },
  { name: "Chrome", icon: <ChromeApp />, open: true },
  { name: "Mail", icon: <MailApp /> },
  { name: "AnyDesk", icon: <AnyDeskApp />, open: true },
  { name: "76", icon: <SeventySixApp /> },
  { name: "Reader", icon: <NewsApp />, open: true },
  {
    name: "WhatsApp",
    icon: (
      <span className="flex size-6 items-center justify-center rounded-full bg-white">
        <FaWhatsapp className="size-4 text-[#25c45c]" />
      </span>
    ),
  },
  { name: "Spotify", icon: <FaSpotify className="size-6 rounded-full bg-black text-[#1ed760]" /> },
  { name: "Comfort", icon: <ComfortApp />, open: true },
  { name: "Notepad", icon: <NotepadApp />, open: true },
  { name: "Outlook", icon: <OutlookMailApp />, open: true },
  { name: "Viewer", icon: <WindowApp />, open: true },
  { name: "Excel", icon: <ExcelApp />, open: true },
  { name: "Outlook new", icon: <OutlookNewApp />, open: true, tone: "bg-[#a65c23]", bar: "w-full bg-[#f07a14]" },
];

function Taskbar() {
  return (
    <footer className={`flex h-10 items-stretch bg-[#1d1d1d] text-white ${SEGOE}`}>
      <button aria-label="Start" className="flex w-12 items-center justify-center">
        <FaWindows className="size-[17px]" />
      </button>
      <div className="flex w-[288px] items-center border border-[#bdbdbd] bg-[#f2f2f2] pr-1 pl-[11px]">
        <svg viewBox="0 0 17 17" className="size-[17px]" fill="none" stroke="#222" strokeWidth="1.300">
          <circle cx="10.500" cy="6.500" r="5.600" />
          <path d="M6.500 10.500.7 16.300" />
        </svg>
        <input
          aria-label="Search"
          placeholder="Type here to search"
          className="ml-[11px] w-0 flex-1 bg-transparent text-sm text-[#222] outline-none placeholder:text-[#333]"
        />
        <button aria-label="Work" className="flex h-8 w-[71px] items-center justify-center rounded-md bg-[#e2e2e2]">
          <svg viewBox="0 0 30 25" className="h-[25px] w-[30px]">
            <path d="M11 5V2.500Q11 1 12.500 1h5Q19 1 19 2.500V5" fill="none" stroke="#333" strokeWidth="2.200" />
            <rect y="4" width="30" height="21" rx="1.500" fill="#b56208" />
            <path d="M0 5.500Q0 4 1.500 4h27Q30 4 30 5.500V15H0z" fill="#ef9412" />
            <rect x="12.500" y="13" width="5" height="5" fill="#fbd734" />
          </svg>
        </button>
      </div>
      <button aria-label="Task view" className="flex w-[49px] items-center justify-center">
        <svg viewBox="0 0 17 16" className="h-4 w-[17px]" fill="none" stroke="#fff" strokeWidth="1.200">
          <path d="M1 0v2.500h10V0M1 16v-2.500h10V16M.6 5h10.800v6H.6zM15 0v4M15 9v7" />
          <path d="M13.500 4.500h3v3h-3z" fill="#fff" stroke="none" />
        </svg>
      </button>
      {APPS.map((app) => (
        <button key={app.name} aria-label={app.name} className={`relative flex w-10 items-center justify-center ${app.tone ?? ""}`}>
          {app.icon}
          {app.open && (
            <span className={`absolute bottom-0 left-1/2 h-0.5 -translate-x-1/2 ${app.bar ?? "w-[31px] bg-[#76b9ed]"}`} />
          )}
        </button>
      ))}
      <button className="ml-auto flex items-center gap-2 text-sm">
        <svg viewBox="0 0 25 21" className="h-[21px] w-[25px]">
          <circle cx="12.500" cy="10.500" r="10" fill="#f8a01c" />
          <path d="M4 4h19M1 8.500h12M12 12h12M0 16.500h19" stroke="#fbe0a8" strokeWidth="1.500" strokeLinecap="round" />
        </svg>
        33°C
      </button>
      <button aria-label="Show hidden icons" className="ml-[25px] flex items-center">
        <svg viewBox="0 0 12 7" className="h-[7px] w-3" fill="none" stroke="#fff" strokeWidth="1.300">
          <path d="M.5 6.500 6 1l5.500 5.500" />
        </svg>
      </button>
      <button aria-label="Meet now" className="ml-3 flex items-center">
        <svg viewBox="0 0 12 16" className="h-4 w-3" fill="none" stroke="#fff" strokeWidth="1.200">
          <rect x=".6" y="4" width="8" height="8" rx="1.500" />
          <path d="M8.500 7 11.300 5.200v5.600L8.500 9M1.500 2Q5 .3 8.500 2M1.500 14Q5 15.700 8.500 14" />
        </svg>
      </button>
      <button aria-label="Battery" className="ml-2.5 flex items-center">
        <svg viewBox="0 0 16 11" className="h-[11px] w-4" fill="none" stroke="#fff" strokeWidth="1.200">
          <path d="M6 2.500h8.500v7H4.500V7M15.500 4.500v3M.5 3.500h5V5q0 2-2.500 2T.5 5zM1.800 0v3M4.200 0v3" />
          <path d="M7 4h6.500v4.500H6z" fill="#fff" stroke="none" />
        </svg>
      </button>
      <button aria-label="Network" className="ml-2 flex items-center">
        <svg viewBox="0 0 16 14" className="h-[14px] w-4" fill="none" stroke="#fff" strokeWidth="1.200">
          <path d="M5.500 1.600h10v8H4V6M7 13h6M10 9.600V13M.6.600h4v4h-4zM2.500 4.600V12" />
        </svg>
      </button>
      <button aria-label="Volume level" className="ml-2 flex items-center">
        <svg viewBox="0 0 17 14" className="h-[14px] w-[17px]" fill="none" stroke="#fff" strokeWidth="1.200">
          <path d="M.6 4.800h2.500L6.500 1.500v11L3.100 9.200H.6zM8.800 4.700a3.500 3.500 0 0 1 0 4.600M11.200 2.800a6.500 6.500 0 0 1 0 8.400M13.600.8a9.500 9.500 0 0 1 0 12.400" />
        </svg>
      </button>
      <button className="ml-2 flex w-[54px] flex-col items-center justify-center text-[11px] leading-[18px] whitespace-nowrap">
        <span>11:06 AM</span>
        <span>4/17/2024</span>
      </button>
      <button aria-label="Notifications" className="relative ml-[17px] flex w-6 items-center">
        <svg viewBox="0 0 16 15" className="h-[15px] w-4">
          <path d="M0 0h16v12H7l-3.500 3v-3H0z" fill="#fff" />
          <path d="M3 3.500h10M3 6.200h10M3 8.900h6" stroke="#1d1d1d" />
        </svg>
        <span className="absolute right-0 bottom-1 flex size-[17px] items-center justify-center rounded-full border border-[#8a8a8a] bg-[#3a3a3a] text-[10px] leading-none">
          13
        </span>
      </button>
      <span className="mr-[3px] ml-3 w-px bg-[#6b6b6b]" />
    </footer>
  );
}

export default function App() {
  return (
    <div className="flex min-h-screen flex-col bg-[#f7f7f7] font-['Liberation_Sans',Arial,sans-serif]">
      <BrowserTabs />
      <AddressBar />
      <div className="flex flex-1">
        <main className="flex min-w-0 flex-1 flex-col pb-1 pl-1">
          <AppHeader />
          <PageTitle />
          <div className="flex flex-1">
            <div className="flex min-w-0 flex-1 flex-col">
              <VideoWall />
              <PlaybackBar />
              <Timeline />
              <FilterBar />
            </div>
            <SidePanel />
          </div>
        </main>
        <EdgeSidebar />
      </div>
      <Taskbar />
    </div>
  );
}
